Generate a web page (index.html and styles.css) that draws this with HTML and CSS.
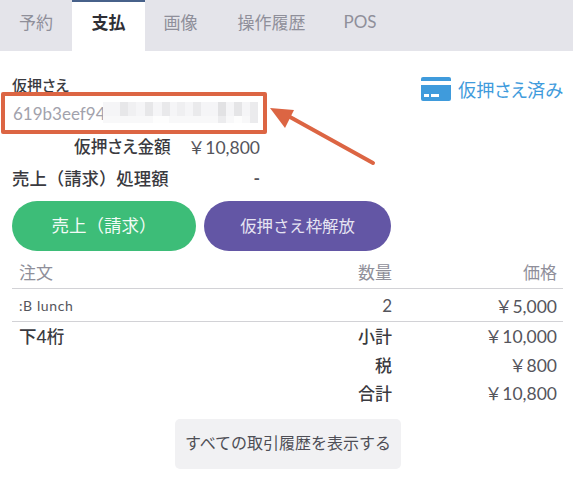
FILE: index.html
```html
<!DOCTYPE html>
<html lang="ja">
<head>
<meta charset="utf-8">
<title>支払</title>
<link rel="stylesheet" href="styles.css">
</head>
<body>
<nav class="tabs">
  <span class="tab">予約</span>
  <span class="tab active">支払</span>
  <span class="tab">画像</span>
  <span class="tab">操作履歴</span>
  <span class="tab">POS</span>
</nav>
<main class="content">
  <section class="auth">
    <div class="auth-head">
      <span class="label kana">仮押さえ</span>
      <span class="status kana">
        <svg class="card" viewBox="0 0 30 24" aria-hidden="true">
          <path d="M2 0h26a2 2 0 0 1 2 2v2H0V2a2 2 0 0 1 2-2z"/>
          <path fill-rule="evenodd" d="M0 8h30v14a2 2 0 0 1-2 2H2a2 2 0 0 1-2-2zM3 17v3h5v-3zM10 17v3h8v-3z"/>
        </svg>
        仮押さえ済み
      </span>
    </div>
    <div class="code">
      <span>619b3eef94</span>
      <svg class="mosaic" viewBox="0 0 155 21" aria-hidden="true" shape-rendering="crispEdges">
        <rect width="155" height="21" fill="#f5f5f7"/>
        <rect x="17" width="8" height="14" fill="#e7e7e9"/><rect x="42" width="8" height="14" fill="#e7e7e9"/>
        <rect x="59" width="8" height="14" fill="#e9e9eb"/><rect x="74" width="8" height="14" fill="#efeff1"/>
        <rect x="90" width="8" height="14" fill="#eaeaec"/><rect x="115" width="8" height="14" fill="#e2e2e4"/>
        <rect x="131" width="8" height="14" fill="#e5e5e7"/><rect x="25" width="8" height="14" fill="#f0f0f2"/>
        <rect y="14" width="155" height="7" fill="#f8f8f9"/>
        <rect x="50" y="14" width="16" height="7" fill="#fdfdfd"/><rect x="115" y="14" width="8" height="7" fill="#ececee"/>
        <rect x="131" y="14" width="8" height="7" fill="#fdfdfd"/><rect x="147" width="8" height="21" fill="#ebebed"/>
      </svg>
    </div>
    <div class="amount"><span class="amount-key kana">仮押さえ金額</span><span class="amount-val">￥10,800</span></div>
    <div class="amount processed"><span class="amount-key">売上（請求）処理額</span><span class="amount-val">-</span></div>
  </section>
  <div class="actions">
    <button class="pill green">売上（請求）</button>
    <button class="pill purple kana">仮押さえ枠解放</button>
  </div>
  <div class="row head"><span class="c1">注文</span><span class="c2">数量</span><span class="c3">価格</span></div>
  <div class="row item"><span class="c1 latin">:B lunch</span><span class="c2 num">2</span><span class="c3">￥5,000</span></div>
  <div class="row total t1"><span class="c1 strong last4">下4桁</span><span class="c2 strong">小計</span><span class="c3">￥10,000</span></div>
  <div class="row total t2"><span class="c1"></span><span class="c2 strong">税</span><span class="c3">￥800</span></div>
  <div class="row total t3"><span class="c1"></span><span class="c2 strong">合計</span><span class="c3">￥10,800</span></div>
  <div class="more"><button class="history kana">すべての取引履歴を表示する</button></div>
</main>
<svg class="arrow" viewBox="0 0 573 484" aria-hidden="true">
  <path d="M373 163 L290 117" stroke="#dc6543" stroke-width="4" stroke-linecap="round" fill="none"/>
  <path d="M270 108 L294 110 L285 128 Z" fill="#dc6543"/>
</svg>
</body>
</html>
```
FILE: styles.css
```css
* { box-sizing: border-box; }
html, body { margin: 0; padding: 0; }
body {
  width: 573px;
  height: 484px;
  overflow: hidden;
  background: #fff;
  color: #3a3a40;
  font-family: Lato, "Noto Sans CJK JP", sans-serif;
  font-size: 17px;
  position: relative;
}
.kana { font-feature-settings: "palt"; }
.tabs {
  display: flex;
  height: 51px;
  background: #e4e4ea;
}
.tab {
  width: 72px;
  display: flex;
  align-items: center;
  justify-content: center;
  padding-bottom: 8px;
  color: #8f8f9a;
}
.tab:nth-child(3) { width: 71px; }
.tab:nth-child(4) { width: 111px; }
.tab:nth-child(5) { width: 66px; }
.tab.active {
  width: 73px;
  background: #fff;
  color: #2f2f35;
  font-weight: 700;
  border-top: 2px solid #47618a;
  padding-bottom: 10px;
}
.content { padding: 0 12px; }
.auth { display: flex; flex-direction: column; }
.auth-head {
  display: flex;
  justify-content: space-between;
  padding-top: 24px;
  height: 41px;
  margin-right: -2px;
}
.label { font-size: 15px; font-weight: 500; line-height: 20px; }
.status {
  display: flex;
  align-items: center;
  gap: 7px;
  height: 24px;
  margin-top: 2px;
  color: #3f9bdc;
  font-size: 18.2px;
}
.card { width: 30px; height: 24px; fill: #3f9bdc; }
.code {
  margin: 0 0 0 -11px;
  width: 266px;
  height: 42px;
  border: 4px solid #dc6543;
  border-radius: 2px;
  display: flex;
  align-items: center;
  padding-left: 8px;
  color: #a2a2ac;
  position: relative;
  overflow: hidden;
}
.mosaic { position: absolute; left: 98px; top: 6px; width: 155px; height: 21px; }
.amount {
  display: flex;
  justify-content: flex-end;
  align-items: center;
  width: 248px;
  height: 24px;
  gap: 17px;
}
.amount-key { font-weight: 500; font-size: 16.7px; }
.amount-val { font-size: 17.5px; color: #55555c; }
.amount.processed { justify-content: space-between; height: 30px; margin-top: 4px; }
.processed .amount-key { font-size: 17.4px; }
.processed .amount-val { font-weight: 700; }
.actions { display: flex; gap: 8px; margin-top: 9px; }
.pill {
  height: 50px;
  border: 0;
  border-radius: 25px;
  padding: 0 0 3px;
  color: #fff;
  font: inherit;
}
.green { width: 184px; background: #3dbd78; font-size: 17.5px; color: #f2fbf6; }
.purple { width: 187px; background: #6356a5; color: #e6e4f2; font-size: 16.4px; }
.row {
  display: grid;
  grid-template-columns: 293px 80px 165px;
  align-items: center;
  padding-left: 7px;
  width: 551px;
}
.c2, .c3 { text-align: right; }
.c3 { color: #55555c; font-size: 17.5px; }
.head { height: 38px; border-bottom: 1px solid #d2d2d6; padding-top: 3px; color: #8f8f9a; }
.head .c3 { color: #8f8f9a; font-size: 17px; }
.item { height: 33px; border-bottom: 1px solid #d2d2d6; }
.latin { font-size: 14px; letter-spacing: .6px; color: #55555c; }
.num { color: #55555c; }
.t1 { height: 29px; padding-bottom: 2px; }
.t2 { height: 27px; }
.t3 { height: 28px; }
.strong { font-weight: 500; }
.last4 { font-size: 17.5px; }
.more { display: flex; padding: 13px 0 0 163px; }
.history {
  width: 226px;
  height: 50px;
  border: 0;
  border-radius: 5px;
  padding: 0 0 4px;
  background: #f1f1f3;
  color: #4e4e55;
  font: inherit;
  font-size: 16px;
}
.arrow { position: absolute; left: 0; top: 0; width: 573px; height: 484px; pointer-events: none; }
```
